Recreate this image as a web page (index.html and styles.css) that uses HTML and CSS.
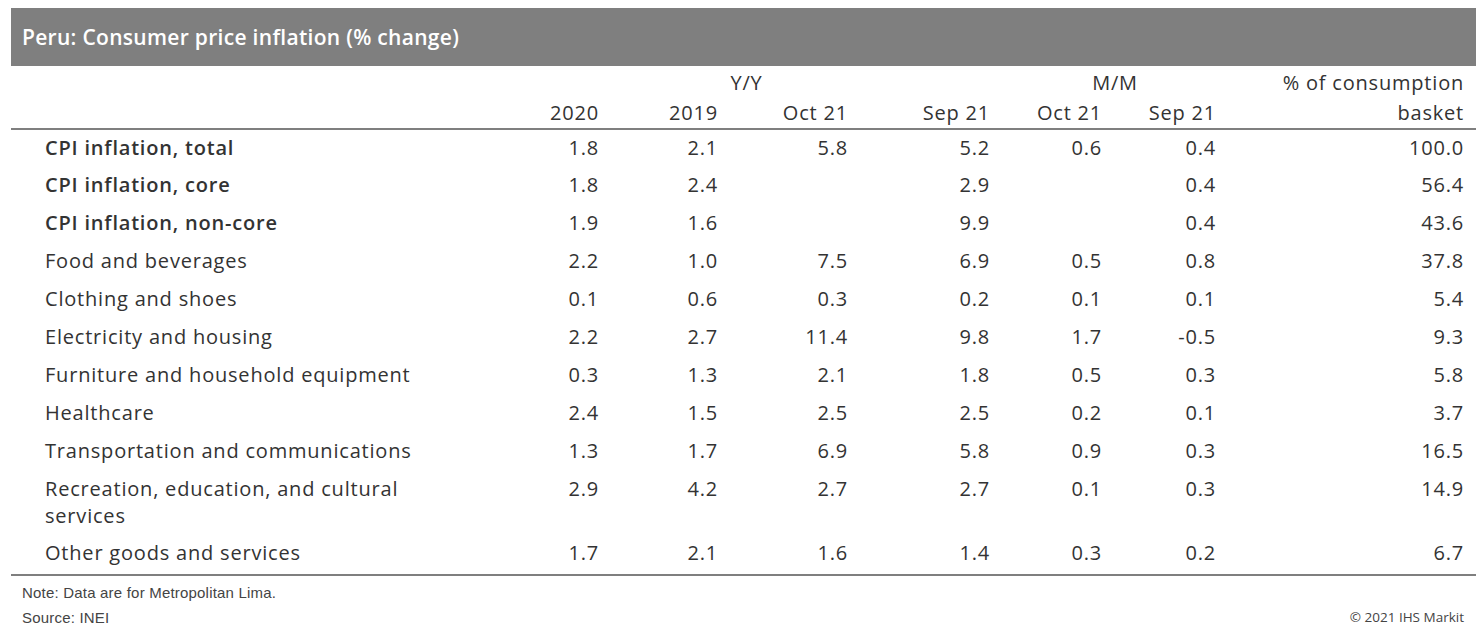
FILE: index.html
```html
<!DOCTYPE html>
<html lang="en">
<head>
<meta charset="utf-8">
<title>Peru: Consumer price inflation</title>
<link rel="stylesheet" href="styles.css">
</head>
<body>
<div class="page">
  <div class="title-bar">Peru: Consumer price inflation (% change)</div>
  <table class="data">
    <colgroup>
      <col class="c-label">
      <col class="c-2020">
      <col class="c-2019">
      <col class="c-oct">
      <col class="c-sep">
      <col class="c-moct">
      <col class="c-msep">
      <col class="c-basket">
    </colgroup>
    <thead>
      <tr class="h1">
        <th></th>
        <th colspan="4" class="center">Y/Y</th>
        <th colspan="2" class="center">M/M</th>
        <th class="num">% of consumption</th>
      </tr>
      <tr class="h2">
        <th></th>
        <th class="num">2020</th>
        <th class="num">2019</th>
        <th class="num">Oct 21</th>
        <th class="num">Sep 21</th>
        <th class="num">Oct 21</th>
        <th class="num">Sep 21</th>
        <th class="num">basket</th>
      </tr>
    </thead>
    <tbody>
      <tr class="bold"><td class="label">CPI inflation, total</td><td>1.8</td><td>2.1</td><td>5.8</td><td>5.2</td><td>0.6</td><td>0.4</td><td>100.0</td></tr>
      <tr class="bold"><td class="label">CPI inflation, core</td><td>1.8</td><td>2.4</td><td></td><td>2.9</td><td></td><td>0.4</td><td>56.4</td></tr>
      <tr class="bold"><td class="label">CPI inflation, non-core</td><td>1.9</td><td>1.6</td><td></td><td>9.9</td><td></td><td>0.4</td><td>43.6</td></tr>
      <tr><td class="label">Food and beverages</td><td>2.2</td><td>1.0</td><td>7.5</td><td>6.9</td><td>0.5</td><td>0.8</td><td>37.8</td></tr>
      <tr><td class="label">Clothing and shoes</td><td>0.1</td><td>0.6</td><td>0.3</td><td>0.2</td><td>0.1</td><td>0.1</td><td>5.4</td></tr>
      <tr><td class="label">Electricity and housing</td><td>2.2</td><td>2.7</td><td>11.4</td><td>9.8</td><td>1.7</td><td>-0.5</td><td>9.3</td></tr>
      <tr><td class="label">Furniture and household equipment</td><td>0.3</td><td>1.3</td><td>2.1</td><td>1.8</td><td>0.5</td><td>0.3</td><td>5.8</td></tr>
      <tr><td class="label">Healthcare</td><td>2.4</td><td>1.5</td><td>2.5</td><td>2.5</td><td>0.2</td><td>0.1</td><td>3.7</td></tr>
      <tr><td class="label">Transportation and communications</td><td>1.3</td><td>1.7</td><td>6.9</td><td>5.8</td><td>0.9</td><td>0.3</td><td>16.5</td></tr>
      <tr><td class="label">Recreation, education, and cultural services</td><td>2.9</td><td>4.2</td><td>2.7</td><td>2.7</td><td>0.1</td><td>0.3</td><td>14.9</td></tr>
      <tr><td class="label">Other goods and services</td><td>1.7</td><td>2.1</td><td>1.6</td><td>1.4</td><td>0.3</td><td>0.2</td><td>6.7</td></tr>
    </tbody>
  </table>
  <div class="footer">
    <div class="notes">
      <div class="note">Note: Data are for Metropolitan Lima.</div>
      <div class="note">Source: INEI</div>
    </div>
    <div class="copyright">© 2021 IHS Markit</div>
  </div>
</div>
</body>
</html>
```

FILE: styles.css
```css
* { box-sizing: border-box; }

html, body {
  margin: 0;
  padding: 0;
  background: #ffffff;
}

body {
  font-family: "Open Sans", "Noto Sans", "Liberation Sans", sans-serif;
  color: #333333;
}

.page {
  width: 1476px;
  padding: 8px 0 0 11px;
}

.title-bar {
  height: 58px;
  background: #7f7f7f;
  color: #ffffff;
  font-weight: 600;
  font-size: 21px;
  letter-spacing: 0.3px;
  line-height: 58px;
  padding-left: 11px;
}

.data {
  width: 1465px;
  border-collapse: collapse;
  table-layout: fixed;
  font-size: 20px;
  letter-spacing: 0.8px;
}

.c-label { width: 480px; }
.c-2020 { width: 120px; }
.c-2019 { width: 119px; }
.c-oct { width: 130px; }
.c-sep { width: 142px; }
.c-moct { width: 112px; }
.c-msep { width: 114px; }
.c-basket { width: 248px; }

.data th {
  font-weight: 400;
  padding: 0 12px;
  line-height: 28px;
  white-space: nowrap;
}

.data th.center { text-align: center; }
.data th.num { text-align: right; }

.data tr.h1 th { padding-top: 3px; }
.data tr.h2 th {
  padding-top: 2px;
  padding-bottom: 1px;
  border-bottom: 2px solid #7f7f7f;
}

.data td {
  padding: 3.5px 12px 7.4px 12px;
  line-height: 27px;
  text-align: right;
  vertical-align: top;
}

.data td.label {
  text-align: left;
  padding-left: 34px;
  padding-right: 60px;
}

.data tr.bold td.label { font-weight: 600; }

.data tbody tr:last-child td {
  border-bottom: 2px solid #7f7f7f;
}

.footer {
  display: flex;
  justify-content: space-between;
  align-items: flex-end;
  width: 1465px;
  padding-top: 4px;
}

.notes {
  padding-left: 11px;
}

.note {
  font-family: "Liberation Sans", Arial, sans-serif;
  font-size: 15px;
  letter-spacing: 0.2px;
  line-height: 25px;
  color: #444444;
}

.copyright {
  font-size: 13.5px;
  line-height: 25px;
  color: #444444;
  padding-right: 12px;
}
```
